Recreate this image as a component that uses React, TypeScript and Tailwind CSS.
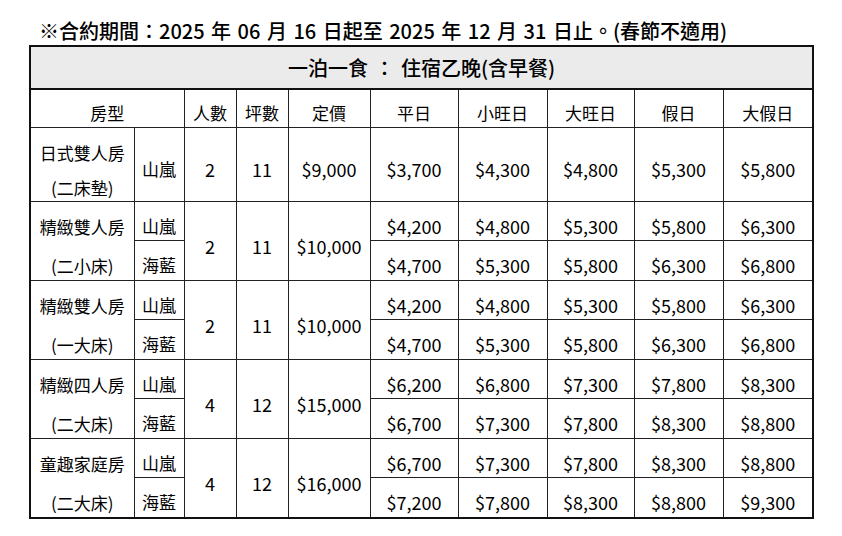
const font = "font-['Noto_Sans_CJK_TC','Noto_Sans',sans-serif]";

type Row = { view: string; prices: string[] };
type Room = {
  name: string;
  bed: string;
  people: number;
  size: number;
  list: string;
  rows: Row[];
};

const rooms: Room[] = [
  {
    name: "日式雙人房",
    bed: "(二床墊)",
    people: 2,
    size: 11,
    list: "$9,000",
    rows: [{ view: "山嵐", prices: ["$3,700", "$4,300", "$4,800", "$5,300", "$5,800"] }],
  },
  {
    name: "精緻雙人房",
    bed: "(二小床)",
    people: 2,
    size: 11,
    list: "$10,000",
    rows: [
      { view: "山嵐", prices: ["$4,200", "$4,800", "$5,300", "$5,800", "$6,300"] },
      { view: "海藍", prices: ["$4,700", "$5,300", "$5,800", "$6,300", "$6,800"] },
    ],
  },
  {
    name: "精緻雙人房",
    bed: "(一大床)",
    people: 2,
    size: 11,
    list: "$10,000",
    rows: [
      { view: "山嵐", prices: ["$4,200", "$4,800", "$5,300", "$5,800", "$6,300"] },
      { view: "海藍", prices: ["$4,700", "$5,300", "$5,800", "$6,300", "$6,800"] },
    ],
  },
  {
    name: "精緻四人房",
    bed: "(二大床)",
    people: 4,
    size: 12,
    list: "$15,000",
    rows: [
      { view: "山嵐", prices: ["$6,200", "$6,800", "$7,300", "$7,800", "$8,300"] },
      { view: "海藍", prices: ["$6,700", "$7,300", "$7,800", "$8,300", "$8,800"] },
    ],
  },
  {
    name: "童趣家庭房",
    bed: "(二大床)",
    people: 4,
    size: 12,
    list: "$16,000",
    rows: [
      { view: "山嵐", prices: ["$6,700", "$7,300", "$7,800", "$8,300", "$8,800"] },
      { view: "海藍", prices: ["$7,200", "$7,800", "$8,300", "$8,800", "$9,300"] },
    ],
  },
];

const heads = ["人數", "坪數", "定價", "平日", "小旺日", "大旺日", "假日", "大假日"];

// text sits a little low in each cell, like the scanned sheet
const cell = "border border-[#222] p-0 pt-[10px] text-center align-middle leading-[22px]";
const cjk = `${cell} text-[17px]`;
const num = `${cell} text-[18px]`;

export default function App() {
  return (
    <div className={`min-h-screen bg-white pl-[29px] pt-[18px] text-black ${font}`}>
      <div className="h-[26px] pl-[10px] text-[20px] font-medium leading-[26px] [word-spacing:2px]">
        ※合約期間：2025 年 06 月 16 日起至 2025 年 12 月 31 日止。(春節不適用)
      </div>
      <table className="mt-[1px] w-[783px] table-fixed border-collapse border-2 border-[#111]">
        <colgroup>
          <col className="w-[104px]" />
          <col className="w-[50px]" />
          <col className="w-[52px]" />
          <col className="w-[52px]" />
          <col className="w-[82px]" />
          <col className="w-[88px]" />
          <col className="w-[89px]" />
          <col className="w-[87px]" />
          <col className="w-[89px]" />
          <col className="w-[90px]" />
        </colgroup>
        <tbody>
          <tr className="h-[43px]">
            <td
              colSpan={10}
              className="border-2 border-[#111] bg-[#ebebeb] p-0 text-center text-[20px] font-medium [word-spacing:2px]"
            >
              一泊一食 ： 住宿乙晚(含早餐)
            </td>
          </tr>
          <tr className="h-[38px]">
            <td colSpan={2} className={cjk}>
              房型
            </td>
            {heads.map((h) => (
              <td key={h} className={cjk}>
                {h}
              </td>
            ))}
          </tr>
          {rooms.map((room, i) =>
            room.rows.map((row, j) => {
              const single = room.rows.length === 1;
              return (
                <tr key={`${i}-${j}`} className={single ? "h-[74px]" : "h-[39px]"}>
                  {j === 0 && (
                    <td
                      rowSpan={room.rows.length}
                      className="border border-[#222] p-0 text-center align-middle text-[17px]"
                    >
                      <div
                        className={
                          single
                            ? "relative top-[6px] leading-[35px]"
                            : "relative top-[5px] leading-[39px]"
                        }
                      >
                        <div>{room.name}</div>
                        <div>{room.bed}</div>
                      </div>
                    </td>
                  )}
                  <td className={cjk}>{row.view}</td>
                  {j === 0 && (
                    <>
                      <td rowSpan={room.rows.length} className={num}>
                        {room.people}
                      </td>
                      <td rowSpan={room.rows.length} className={num}>
                        {room.size}
                      </td>
                      <td rowSpan={room.rows.length} className={num}>
                        {room.list}
                      </td>
                    </>
                  )}
                  {row.prices.map((p, k) => (
                    <td key={k} className={num}>
                      {p}
                    </td>
                  ))}
                </tr>
              );
            }),
          )}
        </tbody>
      </table>
    </div>
  );
}
